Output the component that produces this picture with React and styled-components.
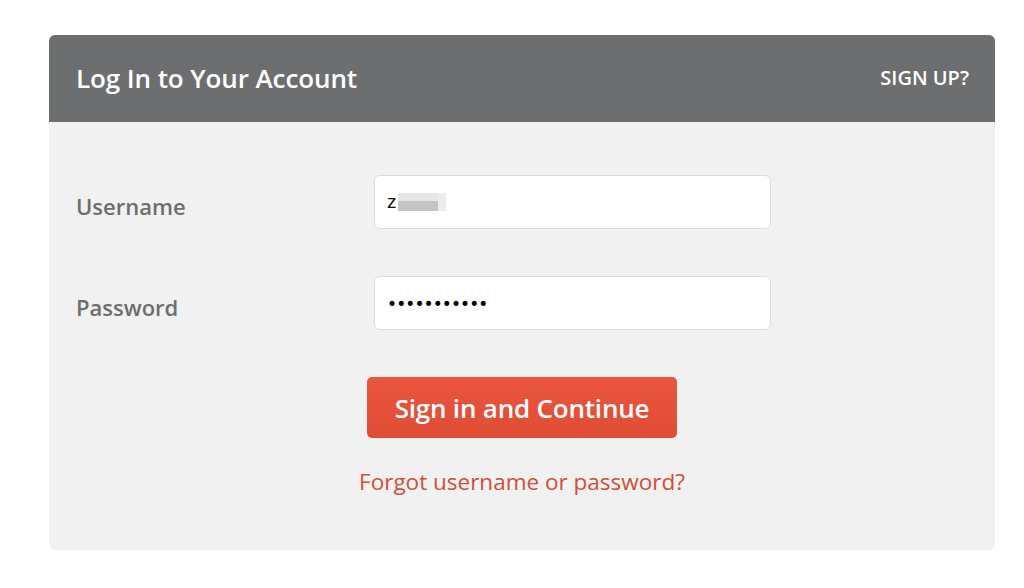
import styled, { createGlobalStyle } from 'styled-components';

const GlobalStyle = createGlobalStyle`
  html, body {
    margin: 0;
    padding: 0;
    background: #fff;
    font-family: "Open Sans", Lato, sans-serif;
  }
`;

const Page = styled.div`
  width: 1024px;
  height: 588px;
  padding: 35px 29px 0 49px;
  box-sizing: border-box;
`;

const Card = styled.section`
  width: 946px;
  height: 515px;
  background: #f1f1f1;
  border-radius: 6px;
  overflow: hidden;
  display: flex;
  flex-direction: column;
`;

const Header = styled.header`
  height: 87px;
  background: #6d6e70;
  display: flex;
  align-items: center;
  justify-content: space-between;
  padding: 0 26px 2px 27px;
  box-sizing: border-box;
  color: #fff;
`;

const Title = styled.h1`
  margin: 0;
  font-size: 26px;
  font-weight: 600;
  letter-spacing: -0.1px;
`;

const SignUp = styled.a`
  font-size: 20px;
  font-weight: 600;
  color: #fff;
  text-decoration: none;
`;

const Body = styled.div`
  padding: 53px 27px 0 27px;
  display: flex;
  flex-direction: column;
`;

const Row = styled.div`
  display: flex;
  align-items: center;
  margin-bottom: 47px;
`;

const Label = styled.label`
  width: 298px;
  font-size: 22px;
  font-weight: 600;
  color: #6d6e70;
  padding-top: 7px;
`;

const Field = styled.div`
  width: 397px;
  height: 54px;
  box-sizing: border-box;
  background: #fff;
  border: 1px solid #dcdcdc;
  border-radius: 6px;
  display: flex;
  align-items: center;
  padding: 0 12px;
  font-family: "Liberation Sans", sans-serif;
  font-size: 19px;
  color: #111;
`;

const Redacted = styled.span`
  display: inline-block;
  width: 40px;
  height: 18px;
  margin-left: 1px;
  background: linear-gradient(#e6e6e6 0 45%, #c4c4c4 45% 100%);
  box-shadow: 8px 0 0 #ececec;
  filter: blur(0.6px);
`;

const Dots = styled.span`
  font-family: "DejaVu Sans", sans-serif;
  font-size: 17px;
  letter-spacing: -0.9px;
  padding-top: 1px;
  color: #000;
`;

const Actions = styled.div`
  display: flex;
  flex-direction: column;
  align-items: center;
  margin-top: 0;
`;

const Button = styled.button`
  width: 310px;
  height: 61px;
  border: none;
  border-radius: 5px;
  background: linear-gradient(#ea5540, #e04c34);
  color: #fff;
  font-family: "Open Sans", Lato, sans-serif;
  font-size: 26px;
  font-weight: 600;
  letter-spacing: -0.2px;
  cursor: pointer;
`;

const Forgot = styled.a`
  margin-top: 28px;
  font-size: 22.5px;
  color: #cf4f3a;
  text-decoration: none;
`;

export default function App() {
  return (
    <>
      <GlobalStyle />
      <Page>
        <Card>
          <Header>
            <Title>Log In to Your Account</Title>
            <SignUp href="#">SIGN UP?</SignUp>
          </Header>
          <Body>
            <Row>
              <Label>Username</Label>
              <Field>
                z<Redacted />
              </Field>
            </Row>
            <Row>
              <Label>Password</Label>
              <Field>
                <Dots>•••••••••••</Dots>
              </Field>
            </Row>
            <Actions>
              <Button>Sign in and Continue</Button>
              <Forgot href="#">Forgot username or password?</Forgot>
            </Actions>
          </Body>
        </Card>
      </Page>
    </>
  );
}
